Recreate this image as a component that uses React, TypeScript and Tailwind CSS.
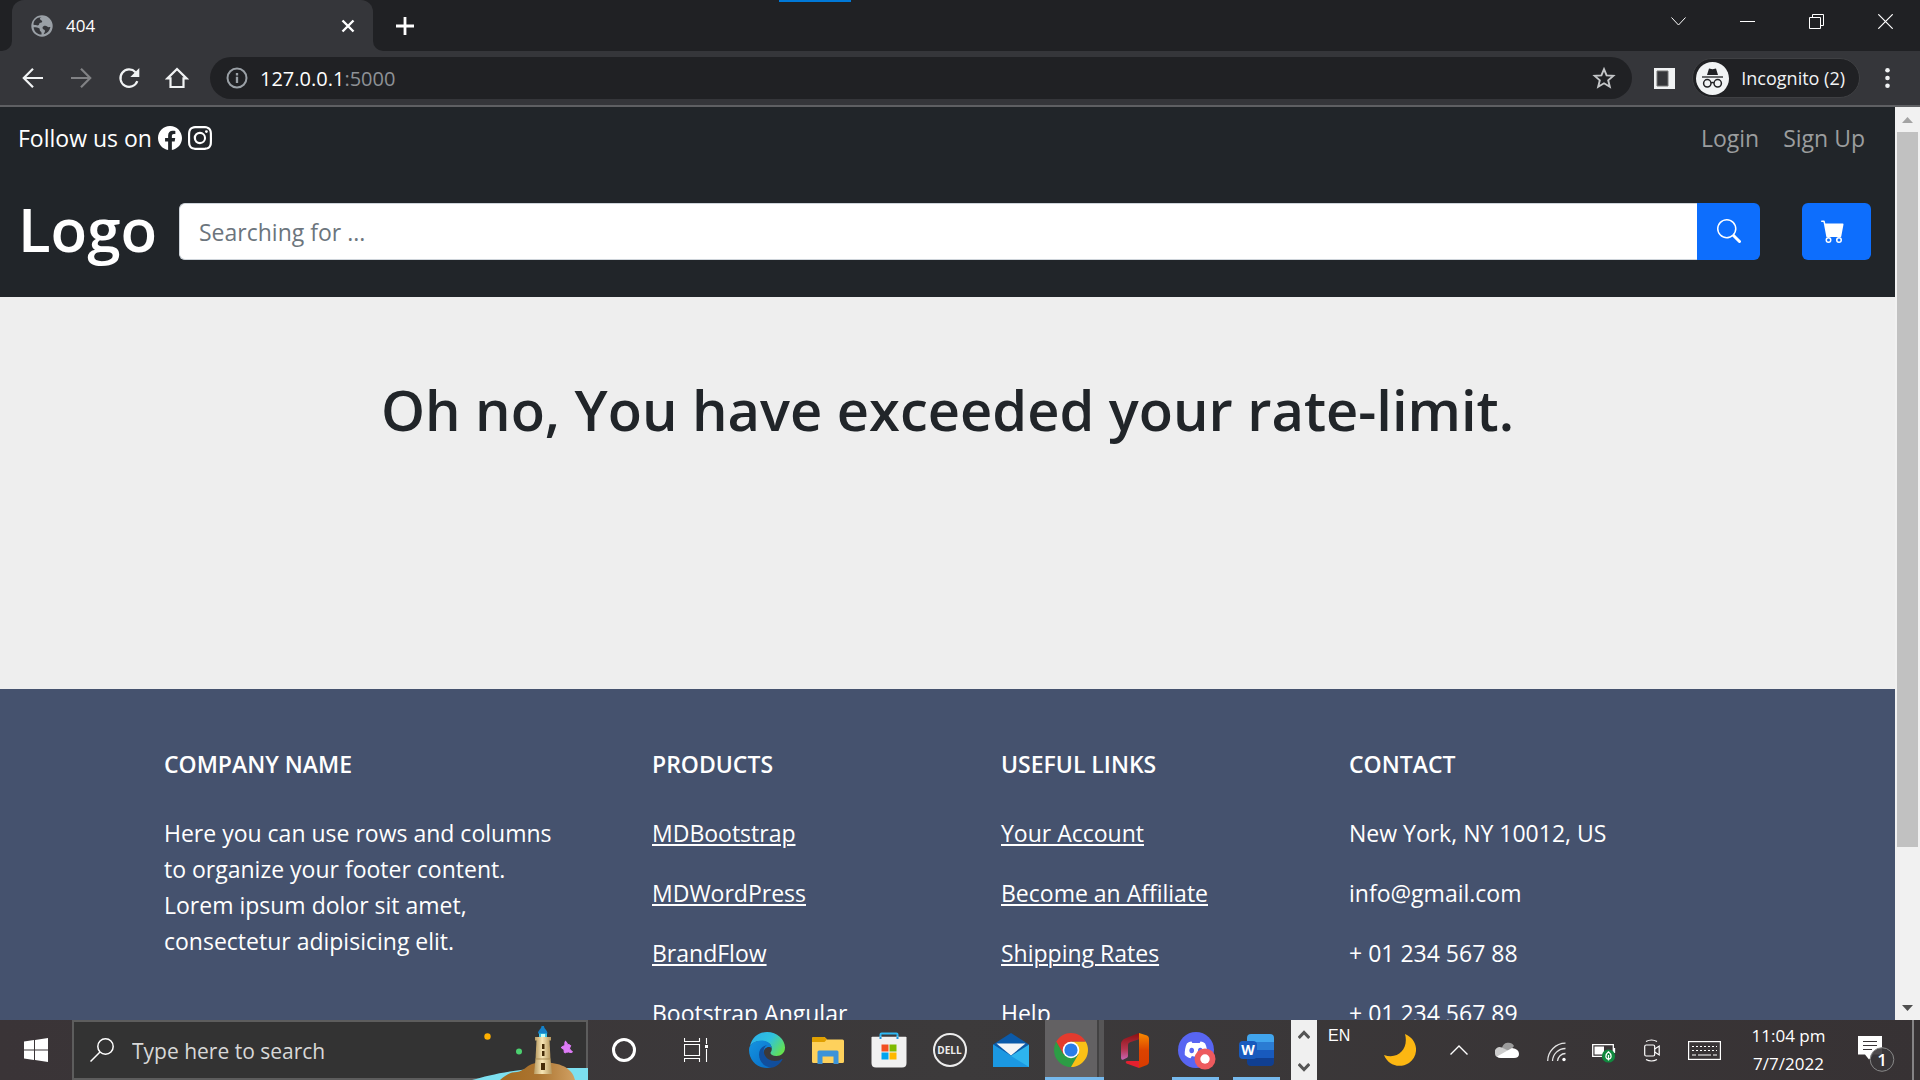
import type { ReactNode } from "react";
import { BsCartFill, BsFacebook, BsInstagram, BsSearch } from "react-icons/bs";

function TabStrip() {
  return (
    <div className="relative flex h-[51px] shrink-0 items-stretch bg-[#202124]">
      <div className="absolute left-[779px] top-0 h-0.5 w-[72px] bg-[#0078d7]" />
      <div className="flex w-3 items-end bg-[#35363a]">
        <div className="h-full w-3 rounded-br-[10px] bg-[#202124]" />
      </div>
      <div className="flex w-[361px] items-center rounded-t-xl bg-[#35363a] pl-[19px] pr-[17px]">
        <svg className="size-[22px]" viewBox="0 0 22 22" aria-hidden="true">
          <circle cx="11" cy="11" r="10.7" fill="#9aa0a6" />
          <path
            d="M10.5 2.3c-2 .6-1.8 1.7-1 2.4.9.7 1.6.6 1.7 1.9 0 1.2-1.5 1.1-2.4 1.5-1 .5-.3 1.9-1.4 2.2-1.500.4-2.600-.5-4.900-.6C2.300 5.600 6 2.100 10.500 2.300Z M2.600 12.200c2.200.2 5 .1 5.900 1.400.6 1-.2 1.900.9 2.600 1 .6 1.300 1 1.200 3.300-4.300.1-7.500-3-8-7.300Z M12.500 11.200c1.300-.8 2.900-.6 3.700.4.700.9 1.700.7 3.200.5-.6 3.800-3.200 6.400-6.700 7.200.1-1.500 1.200-2 1.300-3.400 0-1.200-1.200-1.100-2-1.900-.8-.8-.6-2.100.5-2.800Z"
            fill="#35363a"
          />
        </svg>
        <span className="ml-[13px] text-[17px] text-white">404</span>
        <button className="ml-auto text-white" aria-label="Close tab">
          <svg className="size-4" viewBox="0 0 16 16" fill="none" stroke="currentColor" strokeWidth="2.4">
            <path d="M2.500 2.500l11 11M13.500 2.500l-11 11" />
          </svg>
        </button>
      </div>
      <div className="flex w-3 items-end bg-[#35363a]">
        <div className="h-full w-3 rounded-bl-[10px] bg-[#202124]" />
      </div>
      <button className="ml-[11px] text-white" aria-label="New tab">
        <svg className="size-[18px]" viewBox="0 0 18 18" stroke="currentColor" strokeWidth="2.800">
          <path d="M9 0v18M0 9h18" />
        </svg>
      </button>
      <div className="ml-auto flex h-[43px] text-white">
        <button className="flex w-[69px] items-center justify-center" aria-label="Search tabs">
          <svg className="h-[9px] w-[15px]" viewBox="0 0 15 9" fill="none" stroke="currentColor" strokeWidth="1">
            <path d="M.5.5l7 7.500 7-7.500" />
          </svg>
        </button>
        <button className="flex w-[69px] items-center justify-center" aria-label="Minimize">
          <span className="h-px w-[15px] bg-white" />
        </button>
        <button className="flex w-[69px] items-center justify-center" aria-label="Restore">
          <svg className="size-[15px]" viewBox="0 0 15 15" fill="none" stroke="currentColor" strokeWidth="1">
            <path d="M.5 3.500h11v11h-11zM3.500 3.500v-3h11v11h-3" />
          </svg>
        </button>
        <button className="flex w-[69px] items-center justify-center" aria-label="Close">
          <svg className="size-[15px]" viewBox="0 0 15 15" stroke="currentColor" strokeWidth="1.200">
            <path d="M.3.3l14.400 14.400M14.700.3L.3 14.700" />
          </svg>
        </button>
      </div>
    </div>
  );
}

function NavButton({ label, dim, children }: { label: string; dim?: boolean; children: ReactNode }) {
  return (
    <button
      aria-label={label}
      className={dim ? "flex w-12 items-center justify-center text-[#818285]" : "flex w-12 items-center justify-center text-[#f1f3f4]"}
    >
      <svg className="size-6" viewBox="0 0 24 24" fill="none" stroke="currentColor" strokeWidth="2.200">
        {children}
      </svg>
    </button>
  );
}

function Toolbar() {
  return (
    <div className="flex h-14 shrink-0 items-center border-b-2 border-[#5f6063] bg-[#35363a] pl-[9px]">
      <NavButton label="Back">
        <path d="M22 12H3.500M12 2.800L2.800 12l9.200 9.200" />
      </NavButton>
      <NavButton label="Forward" dim>
        <path d="M2 12h18.500M12 2.800l9.200 9.200-9.200 9.200" />
      </NavButton>
      <NavButton label="Reload">
        <path d="M20.300 15.200a8.700 8.700 0 1 1-1.800-9" />
        <path d="M22.300 2v9h-9z" fill="currentColor" stroke="none" />
      </NavButton>
      <NavButton label="Home">
        <path d="M2.500 12.400L12 3l9.500 9.400h-3V21h-13v-8.600z" />
      </NavButton>
      <div className="ml-[9px] flex h-[42px] flex-1 items-center rounded-full bg-[#202124] px-4">
        <svg className="size-[22px]" viewBox="0 0 22 22" fill="none" stroke="#9aa0a6" strokeWidth="2" aria-hidden="true">
          <circle cx="11" cy="11" r="9.500" />
          <path d="M11 9.800V16M11 6v2.400" strokeWidth="2.300" />
        </svg>
        <p className="ml-3 pt-px text-xl text-[#8e9196]">
          <span className="text-white">127.0.0.1</span>:5000
        </p>
        <button className="ml-auto text-[#c4c6c8]" aria-label="Bookmark this tab">
          <svg className="size-6" viewBox="0 0 24 24" fill="none" stroke="currentColor" strokeWidth="1.900">
            <path d="M12 3.200l2.600 6.200 6.700.5-5.100 4.400 1.600 6.500L12 17.300l-5.800 3.500 1.600-6.500-5.100-4.400 6.700-.5z" />
          </svg>
        </button>
      </div>
      <button className="ml-[22px]" aria-label="Side panel">
        <svg className="size-[21px]" viewBox="0 0 21 21">
          <path d="M0 0h21v21H0z" fill="#f1f3f4" />
          <path d="M3 3h11v15H3z" fill="#35363a" stroke="#777" />
        </svg>
      </button>
      <button className="ml-[17px] flex h-10 items-center rounded-full border border-[#3f4043] bg-[#202124] pl-[3px] pr-[14px] text-lg text-[#f1f3f4]">
        <svg className="mr-3 size-[33px]" viewBox="0 0 33 33" aria-hidden="true">
          <circle cx="16.500" cy="16.500" r="16.500" fill="#f1f3f4" />
          <path d="M11 13l2-6.500 3.500.8 3.500-.8L22 13z" fill="#202124" />
          <path d="M6 15h21" stroke="#202124" strokeWidth="1.300" />
          <g fill="none" stroke="#202124" strokeWidth="1.500">
            <circle cx="11.300" cy="21.300" r="3.700" />
            <circle cx="21.700" cy="21.300" r="3.700" />
            <path d="M15 21q1.500-1 3 0" />
          </g>
        </svg>
        Incognito (2)
      </button>
      <button className="ml-[17px] mr-[22px] text-[#f1f3f4]" aria-label="Menu">
        <svg className="h-5 w-[21px]" viewBox="0 0 21 20" fill="currentColor">
          <circle cx="10.500" cy="2.300" r="2.300" />
          <circle cx="10.500" cy="10" r="2.300" />
          <circle cx="10.500" cy="17.700" r="2.300" />
        </svg>
      </button>
    </div>
  );
}

function SiteHeader() {
  return (
    <header className="bg-[#212529] text-white">
      <div className="flex h-[62px] items-center justify-between pl-[18px] pr-[30px] text-[23px]">
        <div className="flex items-center gap-1.5">
          <span>Follow us on</span>
          <a href="#facebook" aria-label="Facebook">
            <BsFacebook className="size-6" />
          </a>
          <a href="#instagram" aria-label="Instagram">
            <BsInstagram className="size-6" />
          </a>
        </div>
        <nav className="flex gap-6 text-[#9b9d9e]">
          <a href="#login">Login</a>
          <a href="#signup">Sign Up</a>
        </nav>
      </div>
      <div className="flex h-32 items-center pb-1 pl-[18px] pr-6">
        <a href="#home" className="w-[161px] pb-1 text-[60px] font-semibold leading-none">
          Logo
        </a>
        <form className="flex h-[57px] flex-1" onSubmit={(e) => e.preventDefault()}>
          <input
            type="search"
            aria-label="Search"
            placeholder="Searching for ..."
            className="min-w-0 flex-1 rounded-l-md border-y border-l border-[#ced4da] bg-white px-[19px] pt-0.5 text-[23px] text-[#212529] placeholder:text-[#6c757d]"
          />
          <button className="flex w-[63px] items-center justify-center rounded-r-md bg-[#0d6efd]" aria-label="Search">
            <BsSearch className="size-6" />
          </button>
        </form>
        <button className="ml-[42px] flex h-[57px] w-[69px] items-center justify-center rounded-md bg-[#0d6efd] pr-[7px]" aria-label="Cart">
          <BsCartFill className="size-6" />
        </button>
      </div>
    </header>
  );
}

function FooterColumn({ title, children }: { title: string; children: ReactNode }) {
  return (
    <section>
      <h2 className="mb-[33px] text-[23px] font-semibold leading-9">{title}</h2>
      <div className="flex flex-col items-start gap-6">{children}</div>
    </section>
  );
}

const products = ["MDBootstrap", "MDWordPress", "BrandFlow", "Bootstrap Angular"];
const usefulLinks = ["Your Account", "Become an Affiliate", "Shipping Rates", "Help"];
const contacts = ["New York, NY 10012, US", "info@gmail.com", "+ 01 234 567 88", "+ 01 234 567 89"];

function LinkList({ items }: { items: string[] }) {
  return (
    <>
      {items.map((item) => (
        <a key={item} href="#footer" className="underline decoration-2 underline-offset-2">
          {item}
        </a>
      ))}
    </>
  );
}

function SiteFooter() {
  return (
    <footer
      id="footer"
      className="grid grid-cols-[488fr_349fr_348fr_384fr] bg-[#45526e] pl-[164px] pr-[162px] pt-[57px] text-[23px] leading-9 text-white"
    >
      <FooterColumn title="COMPANY NAME">
        <p className="w-[400px]">
          Here you can use rows and columns to organize your footer content. Lorem ipsum dolor sit amet, consectetur
          adipisicing elit.
        </p>
      </FooterColumn>
      <FooterColumn title="PRODUCTS">
        <LinkList items={products} />
      </FooterColumn>
      <FooterColumn title="USEFUL LINKS">
        <LinkList items={usefulLinks} />
      </FooterColumn>
      <FooterColumn title="CONTACT">
        {contacts.map((line) => (
          <p key={line}>{line}</p>
        ))}
      </FooterColumn>
    </footer>
  );
}

function PageScrollbar() {
  return (
    <div className="flex w-[25px] shrink-0 flex-col items-center bg-[#f1f1f1]">
      <svg className="h-[25px] w-[25px] shrink-0" viewBox="0 0 25 25" aria-hidden="true">
        <path d="M7 16l5.500-6 5.500 6z" fill="#a3a3a3" />
      </svg>
      <div className="h-[715px] w-[21px] bg-[#c1c1c1]" />
      <svg className="mt-auto h-[25px] w-[25px] shrink-0" viewBox="0 0 25 25" aria-hidden="true">
        <path d="M7 10l5.500 6 5.500-6z" fill="#505050" />
      </svg>
    </div>
  );
}

function Lighthouse() {
  return (
    <svg className="absolute -bottom-0.5 -right-0.5 h-[58px] w-[120px]" viewBox="0 0 120 58" aria-hidden="true">
      <defs>
        <linearGradient id="tower" x1="0" x2="1">
          <stop offset="0" stopColor="#b99c62" />
          <stop offset=".45" stopColor="#f8e6b6" />
          <stop offset="1" stopColor="#b5965c" />
        </linearGradient>
        <linearGradient id="rock" x1="0" x2="1">
          <stop offset="0" stopColor="#a26a20" />
          <stop offset=".5" stopColor="#ab7430" />
          <stop offset="1" stopColor="#d0a063" />
        </linearGradient>
      </defs>
      <path d="M4 58C25 52 50 46 90 46h30v12z" fill="#7de0f0" />
      <path d="M32 58c6-5 10-8 17-8 7-1 9-6 15-8 6-2 14-2 20-1 7 1 13 3 17 7 4 3 5 7 6 10z" fill="url(#rock)" />
      <path d="M71 11h8v5h-8z" fill="#3cc6e8" />
      <path d="M73 12h4v3h-4z" fill="#c8fff8" />
      <path d="M73.500 4h2.500c0 3 3.500 4 3.500 7.500h-9.500c0-3.500 3.500-4.500 3.500-7.500z" fill="#1581c8" />
      <path d="M67 15h16v3.500H67z" fill="url(#tower)" />
      <path d="M68.500 18h13l1 19H67.500z" fill="url(#tower)" />
      <path d="M67.500 37h15l1.500 15H66z" fill="url(#tower)" />
      <path d="M67.500 37h15" stroke="#a98b52" />
      <path d="M74 22h2.500v5H74zM74 29h2.500v5H74zM73 41h4v7h-4z" fill="#452b08" />
      <circle cx="19.500" cy="14.500" r="3.200" fill="#ffb000" />
      <circle cx="51" cy="29.500" r="3" fill="#4cd070" />
      <path d="M98 19.500q1.500 4 4 3.500 1.500.5 0 2l-.5 2q2 1.500 3 3-1 1-4 0-2 0-3.500 1-1 .5-1-3.500l-2.500-1.500q-1-1 2.500-2 1-1 1-4 .5-1.500 1-.5z" fill="#df7cf8" stroke="#df7cf8" />
    </svg>
  );
}

function TaskButton({ label, active, children }: { label: string; active?: boolean; children: ReactNode }) {
  return (
    <button aria-label={label} className="flex w-[61px] flex-col items-center">
      <span className="flex h-[57px] items-center pt-[3px]">{children}</span>
      {active && <span className="h-[3px] w-[47px] bg-[#76b9ed]" />}
    </button>
  );
}

function EdgeIcon() {
  return (
    <svg className="size-9" viewBox="0 0 36 36">
      <defs>
        <linearGradient id="edgeTop" x1="0" x2="1" y1="0.2" y2=".7">
          <stop offset="0" stopColor="#2bb0ea" />
          <stop offset=".5" stopColor="#2fc2df" />
          <stop offset="1" stopColor="#66e24c" />
        </linearGradient>
        <linearGradient id="edgeLeft" x1="0" x2="1" y1="0" y2="1">
          <stop offset="0" stopColor="#1594e0" />
          <stop offset="1" stopColor="#0669c4" />
        </linearGradient>
      </defs>
      <path d="M1 14C3 5 10 0 18 0c10 0 18 7.500 18 15.500 0 5.500-4 8.500-8.500 8.500-4 0-6-1.500-6-3 0-1 1.300-1.600 1.300-4.300C22.800 12 18 9 12.500 9 7 9 3 11 1 14z" fill="url(#edgeTop)" />
      <path d="M0 18C0 12 6 8.500 12.500 8.500c6 0 10.300 3.500 10.300 8-2-2.600-8.300-2-8.300 5.500 0 7 6 12 12.500 10.500C24 35 21 36 18 36 8 36 0 28 0 18z" fill="url(#edgeLeft)" />
      <path d="M10 22.500c0-5 3.500-8.500 8-9.500-3 2-3.800 5-3 8 1 5 6 8 11 8 3 0 5.500-1 6.700-2 .6-.3 1 .3.700.8-2 3.500-5.400 6.700-9.400 7.700C16 36 10 30 10 22.500z" fill="#114e9c" />
    </svg>
  );
}

function ExplorerIcon() {
  return (
    <svg className="h-[27px] w-8" viewBox="0 0 32 27">
      <path d="M0 1.500Q0 0 1.500 0h11L15 2.500h15.500Q32 2.500 32 4v20.500q0 1.500-1.500 1.500h-29Q0 26 0 24.500z" fill="#fed15c" />
      <path d="M0 1.500Q0 0 1.500 0h11L15 2.200 12.500 5H0z" fill="#e0a000" />
      <path d="M5.500 27V15q0-1.500 1.500-1.500h18q1.500 0 1.500 1.500v12h-5v-7.500h-11V27z" fill="#3b93d9" />
    </svg>
  );
}

function StoreIcon() {
  return (
    <svg className="size-9" viewBox="0 0 36 36">
      <path d="M9.500 8V2.500q0-1 1-1h15q1 0 1 1V8" fill="none" stroke="#2eb9f5" strokeWidth="2" />
      <path d="M.5 5.500q0-.8.8-.8h33.400q.8 0 .8.8V31q0 4.500-4.500 4.500H5Q.5 35.500.5 31z" fill="#f1f1f1" />
      <path d="M9.500 5V7M26.500 5V7" stroke="#1b90d8" strokeWidth="2" />
      <path d="M10.500 12.500h7v7h-7z" fill="#f25022" />
      <path d="M18.500 12.500h7v7h-7z" fill="#7fba00" />
      <path d="M10.500 20.500h7v7h-7z" fill="#00a4ef" />
      <path d="M18.500 20.500h7v7h-7z" fill="#ffb900" />
    </svg>
  );
}

function DellIcon() {
  return (
    <span className="flex size-[34px] items-center justify-center rounded-full border-2 border-[#ededed] text-[10px] font-bold leading-none text-[#ededed]">
      DELL
    </span>
  );
}

function MailIcon() {
  return (
    <svg className="h-[34px] w-9" viewBox="0 0 36 34">
      <path d="M0 11.500L18 0l18 11.500-18 12z" fill="#0b5aa9" />
      <path d="M3.500 10.500h29L18 22.500z" fill="#f5f5f5" />
      <path d="M0 11.500l36 22.500H0z" fill="#1a97e0" />
      <path d="M36 11.500L0 34h36z" fill="#2db4ee" />
      <path d="M0 11.500L36 34H0z" fill="#1b98e2" />
    </svg>
  );
}

function ChromeIcon() {
  return (
    <svg className="size-[34px]" viewBox="0 0 34 34">
      <path d="M2.300 8.500A17 17 0 0 0 17 34l7.300-12.700L17 17 9.600 21.300z" fill="#2c9d45" />
      <path d="M31.700 8.500A17 17 0 0 1 17 34l7.400-12.800L17 8.500z" fill="#fbc116" />
      <path d="M2.300 8.500L9.600 21.300 17 17V8.500h14.700A17 17 0 0 0 2.300 8.500z" fill="#e33b2e" />
      <circle cx="17" cy="17" r="8.300" fill="#fff" />
      <circle cx="17" cy="17" r="6.600" fill="#2a7de9" />
    </svg>
  );
}

function OfficeIcon() {
  return (
    <svg className="h-[35px] w-7" viewBox="0 0 28 35">
      <defs>
        <linearGradient id="officeLeft" x1="0" x2="0" y1="0" y2="1">
          <stop offset="0" stopColor="#8c1010" />
          <stop offset=".6" stopColor="#b5344e" />
          <stop offset="1" stopColor="#c765b4" />
        </linearGradient>
        <linearGradient id="officeRight" x1="0" x2="0" y1="0" y2="1">
          <stop offset="0" stopColor="#f78a00" />
          <stop offset=".5" stopColor="#dc4300" />
          <stop offset="1" stopColor="#d83b01" />
        </linearGradient>
      </defs>
      <path d="M18 0L4 5.500Q0 7.500 0 11v13.500q0 3 2.500 2L6 24.800q1-.6 1-2V12q0-2 2-2.700l9-3z" fill="url(#officeLeft)" />
      <path d="M18 0l8 2.500q2 .8 2 3V29q0 2.200-2 3l-8 3z" fill="url(#officeRight)" />
      <path d="M18 35L5.500 30.500Q3.500 28 6.500 28H18z" fill="#e3202f" />
    </svg>
  );
}

function DiscordIcon() {
  return (
    <span className="relative block size-9">
      <svg className="absolute left-0 top-0 h-[38px] w-[38px]" viewBox="0 0 38 38">
        <circle cx="18" cy="18" r="18" fill="#5865f2" />
        <path d="M13.500 9.500c-2 .3-4 1.200-4.600 2C7.300 14.500 6.500 19 6.800 23c1.500 1.600 3.500 2.600 5.700 3.200l1.400-2.200q4 1 8.200 0l1.400 2.200c2.200-.6 4.200-1.600 5.700-3.200.3-4-.5-8.500-2.100-11.500-.6-.8-2.600-1.700-4.600-2l-.8 1.500h-7.400z" fill="#fff" />
        <ellipse cx="13.700" cy="18.500" rx="2.300" ry="2.700" fill="#5865f2" />
        <ellipse cx="22.300" cy="18.500" rx="2.300" ry="2.700" fill="#5865f2" />
        <circle cx="27" cy="27" r="10.500" fill="#ed5a5e" />
        <circle cx="27" cy="27" r="4.700" fill="#fff" />
      </svg>
    </span>
  );
}

function WordIcon() {
  return (
    <span className="relative block h-8 w-[35px]">
      <span className="ml-2 flex h-8 flex-col overflow-hidden rounded-sm">
        <span className="flex-1 bg-[#41a5ee]" />
        <span className="flex-1 bg-[#2b7cd3]" />
        <span className="flex-1 bg-[#185abd]" />
        <span className="flex-1 bg-[#103f91]" />
      </span>
      <span className="absolute left-0 top-[7px] flex size-[18px] items-center justify-center rounded-sm bg-[#185abd] text-sm font-bold leading-none text-white">
        W
      </span>
    </span>
  );
}

function Tray() {
  return (
    <div className="ml-auto flex items-stretch text-white">
      <div className="flex w-[26px] flex-col items-center justify-between bg-[#f0f0f0] pb-2 pt-2.5">
        <svg className="h-[9px] w-3" viewBox="0 0 12 9" fill="none" stroke="#555" strokeWidth="3">
          <path d="M.7 8L6 2.500 11.300 8" />
        </svg>
        <svg className="h-[9px] w-3" viewBox="0 0 12 9" fill="none" stroke="#555" strokeWidth="3">
          <path d="M.7 1L6 6.500 11.300 1" />
        </svg>
      </div>
      <span className="w-[67px] pl-[11px] pt-[7px] font-['Liberation_Sans',sans-serif] text-base leading-[18px]">EN</span>
      <div className="flex items-center">
        <svg className="size-8" viewBox="0 0 32 32" aria-label="Weather">
          <path d="M21 0c14 6 14 22 4 29C15 35 4 31 0 21c14 5 25-6 21-21z" fill="#fcb712" />
        </svg>
        <svg className="ml-[34px] h-2.5 w-[18px]" viewBox="0 0 18 10" fill="none" stroke="#fff" strokeWidth="1.400">
          <path d="M.5 9.500L9 1l8.500 8.500" />
        </svg>
        <svg className="ml-[27px] h-4 w-6" viewBox="0 0 24 16">
          <path d="M7 6a6.500 6.500 0 0 1 12-2l-5 6z" fill="#9b9b9b" />
          <path d="M0 11.500A5 5 0 0 1 7 5.500l7 3.500-8 6.500Q0 16 0 11.500z" fill="#ccc" />
          <path d="M2 14.500L17 6q7 1 7 6 0 4-5 4H6q-2.500 0-4-1.500z" fill="#fff" />
        </svg>
        <svg className="ml-7 mt-1 h-5 w-[19px]" viewBox="0 0 19 20" fill="none" stroke="#e4e4e4" strokeWidth="1.300">
          <path d="M.7 19A18 18 0 0 1 18.500 1.200M5.500 19A13 13 0 0 1 18.500 6.500M10.500 19a8 8 0 0 1 8-7.500" />
          <circle cx="17" cy="17.500" r="1.700" fill="#fff" stroke="none" />
        </svg>
        <svg className="ml-[26px] mt-1.5 h-5 w-6" viewBox="0 0 24 20">
          <path d="M.7 1.700h20.600v11.600H.7zM22.500 5v5" fill="none" stroke="#fff" strokeWidth="1.300" />
          <path d="M2.500 3.500H12v8H2.500z" fill="#fff" />
          <circle cx="16.500" cy="13" r="6.600" fill="#10893e" />
          <path d="M16.500 8.700c4 3 3 7.300 0 7.500-3-.2-4-4.500 0-7.500zM16.500 12v5.500" fill="none" stroke="#fff" strokeWidth="1.200" />
        </svg>
        <svg className="ml-7 h-[23px] w-4" viewBox="0 0 16 23" fill="none" stroke="#fff" strokeWidth="1.200">
          <rect x=".7" y="6" width="10" height="11" rx="1.500" />
          <path d="M10.700 10l4.500-3v9l-4.500-3M2 2.500q5.500-3 11 0M2 20.500q5.500 3 11 0" />
        </svg>
        <svg className="ml-7 h-[19px] w-[33px]" viewBox="0 0 33 19" fill="none" stroke="#fff" strokeWidth="1.200">
          <rect x=".6" y=".6" width="31.800" height="17.800" />
          <path d="M4 5.500h25M4 9.500h25" strokeDasharray="2 2" />
          <path d="M4 14h4M10 14h13M25 14h4" />
        </svg>
        <p className="ml-7 w-[79px] whitespace-nowrap text-center text-[17px] leading-7">
          11:04 pm
          <br />
          7/7/2022
        </p>
        <svg className="ml-[30px] mt-2 h-9 w-[37px]" viewBox="0 0 37 36" aria-label="Notifications">
          <path d="M0 0h24v18.500H15.500L11 23.500 7 18.500H0z" fill="#fff" />
          <path d="M5 5.500h14M5 9.500h14M5 13.500h9" stroke="#3a3538" strokeWidth="1.200" />
          <circle cx="24" cy="23.500" r="11.800" fill="#3a3638" fillOpacity=".9" stroke="#888" />
          <text x="24" y="30" textAnchor="middle" fontSize="17" fontWeight="600" fill="#fff">
            1
          </text>
        </svg>
      </div>
      <div className="ml-[17px] w-2 border-l-2 border-[#858385]" />
    </div>
  );
}

function Taskbar() {
  return (
    <div className="flex h-[60px] shrink-0 bg-linear-to-r from-[#3a3437] via-[#3c3a3b] to-[#373234]">
      <button className="flex w-[72px] items-center justify-center" aria-label="Start">
        <svg className="size-6" viewBox="0 0 24 24" fill="#fff">
          <path d="M0 3.400l10-1.400v9.500H0zM11 1.900L24 0v11.500H11zM0 12.500h10V22L0 20.600zM11 12.500h13V24l-13-1.900z" />
        </svg>
      </button>
      <label className="relative flex w-[516px] items-center border-2 border-[#5d5d5d] bg-[#333] pl-4">
        <svg className="size-6" viewBox="0 0 24 24" fill="none" stroke="#fff" strokeWidth="1.500">
          <circle cx="15.500" cy="8.500" r="7.700" />
          <path d="M10 14L.5 23.500" />
        </svg>
        <input
          type="text"
          aria-label="Type here to search"
          placeholder="Type here to search"
          className="ml-[18px] w-56 bg-transparent pt-1 text-[21px] text-white placeholder:text-[#d8d8d8]"
        />
        <Lighthouse />
      </label>
      <button className="flex w-[72px] items-center justify-center" aria-label="Cortana">
        <span className="size-6 rounded-full border-[3px] border-white" />
      </button>
      <button className="mr-1 flex w-[72px] items-center justify-center" aria-label="Task view">
        <svg className="size-6" viewBox="0 0 24 24" fill="none" stroke="#fff" strokeWidth="1.100">
          <path d="M.5 0v3.500h15V0M.5 24v-3.500h15V24M.5 6.500h15v11H.5zM22.500 0v6M22.500 11v13" />
          <path d="M21 7h3v3h-3z" fill="#fff" stroke="none" />
        </svg>
      </button>
      <TaskButton label="Edge">
        <EdgeIcon />
      </TaskButton>
      <TaskButton label="File Explorer">
        <ExplorerIcon />
      </TaskButton>
      <TaskButton label="Microsoft Store">
        <StoreIcon />
      </TaskButton>
      <TaskButton label="Dell">
        <DellIcon />
      </TaskButton>
      <TaskButton label="Mail">
        <MailIcon />
      </TaskButton>
      <button aria-label="Chrome" className="ml-1 flex w-[59px] flex-col">
        <span className="flex h-[57px] w-full">
          <span className="flex w-[52px] items-center justify-center bg-[#636163] pt-[3px]">
            <ChromeIcon />
          </span>
          <span className="w-0.5 bg-[#434243]" />
          <span className="w-[5px] bg-[#575657]" />
        </span>
        <span className="h-[3px] w-full bg-[#76b9ed]" />
      </button>
      <TaskButton label="Office">
        <OfficeIcon />
      </TaskButton>
      <TaskButton label="Discord" active>
        <DiscordIcon />
      </TaskButton>
      <TaskButton label="Word" active>
        <WordIcon />
      </TaskButton>
      <Tray />
    </div>
  );
}

export default function App() {
  return (
    <div className="flex h-screen flex-col overflow-hidden font-['Open_Sans',sans-serif]">
      <TabStrip />
      <Toolbar />
      <div className="flex min-h-0 flex-1">
        <div className="min-w-0 flex-1 overflow-hidden bg-[#eee]">
          <SiteHeader />
          <main className="h-[392px] pt-[76px]">
            <h1 className="text-center text-[56px] font-semibold leading-[72px] text-[#212529]">
              Oh no, You have exceeded your rate-limit.
            </h1>
          </main>
          <SiteFooter />
        </div>
        <PageScrollbar />
      </div>
      <Taskbar />
    </div>
  );
}
